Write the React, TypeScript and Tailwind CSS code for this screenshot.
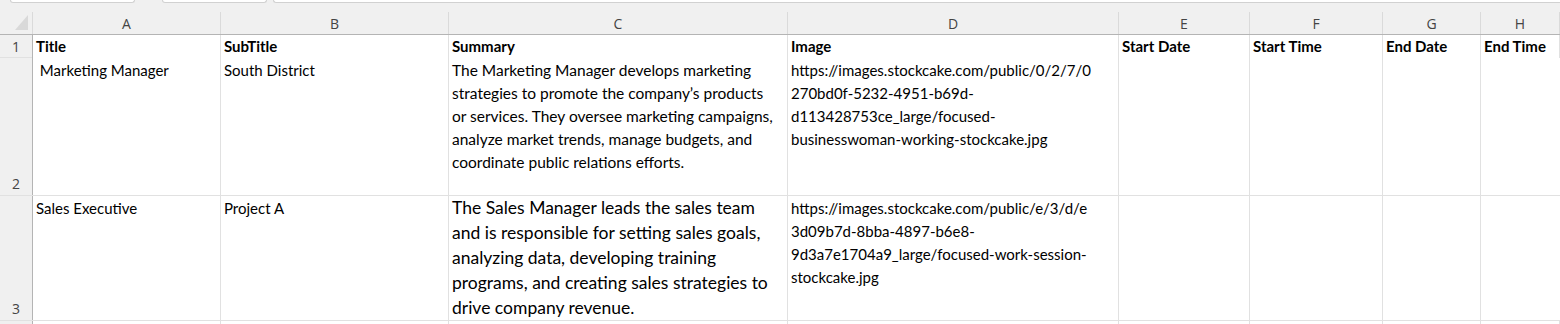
import React from "react";

const cols = ["A", "B", "C", "D", "E", "F", "G", "H"];
const grid = "grid grid-cols-[33px_188px_228px_339px_331px_131px_133px_98px_1fr]";

const rows = [
  {
    n: "2",
    h: "h-[138px]",
    big: false,
    title: " Marketing Manager",
    sub: "South District",
    summary: [
      "The Marketing Manager develops marketing",
      "strategies to promote the company\u2019s products",
      "or services. They oversee marketing campaigns,",
      "analyze market trends, manage budgets, and",
      "coordinate public relations efforts.",
    ],
    image: [
      "https://images.stockcake.com/public/0/2/7/0",
      "270bd0f-5232-4951-b69d-",
      "d113428753ce_large/focused-",
      "businesswoman-working-stockcake.jpg",
    ],
  },
  {
    n: "3",
    h: "h-[125px]",
    big: true,
    title: "Sales Executive",
    sub: "Project A",
    summary: [
      "The Sales Manager leads the sales team",
      "and is responsible for setting sales goals,",
      "analyzing data, developing training",
      "programs, and creating sales strategies to",
      "drive company revenue.",
    ],
    image: [
      "https://images.stockcake.com/public/e/3/d/e",
      "3d09b7d-8bba-4897-b6e8-",
      "9d3a7e1704a9_large/focused-work-session-",
      "stockcake.jpg",
    ],
  },
];

const headers = ["Title", "SubTitle", "Summary", "Image", "Start Date", "Start Time", "End Date", "End Time"];

function Lines({ lines, className }: { lines: string[]; className: string }) {
  return (
    <div className={className}>
      {lines.map((l, i) => (
        <div key={i} className="whitespace-pre">
          {l}
        </div>
      ))}
    </div>
  );
}

export default function App() {
  return (
    <div className="w-[1560px] h-[324px] overflow-hidden bg-[#f0f0f0] font-['Lato','Liberation_Sans',sans-serif] text-black">
      {/* top tab strip */}
      <div className="flex h-[12px] items-start">
        <div className="ml-[10px] h-[3px] w-[125px] rounded-b-[4px] border border-t-0 border-[#d1d1d1] bg-white" />
        <div className="ml-[27px] h-[3px] w-[105px] rounded-b-[4px] border border-t-0 border-[#d1d1d1] bg-white" />
        <div className="ml-[6px] h-[3px] flex-1 rounded-bl-[4px] border border-t-0 border-r-0 border-[#d1d1d1] bg-white" />
      </div>

      {/* column letters */}
      <div className={`${grid} h-[23px] border-b border-[#b4b4b4] font-['Open_Sans','Liberation_Sans',sans-serif] text-[14px] text-[#444]`}>
        <div className="relative border-r border-[#dadada]">
          <div className="absolute left-[15px] top-[3px] h-0 w-0 border-b-[15px] border-l-[13px] border-b-[#d9d9d9] border-l-transparent" />
        </div>
        {cols.map((c) => (
          <div key={c} className="flex items-center justify-center border-r border-[#dadada]">
            {c}
          </div>
        ))}
      </div>

      {/* row 1 headers */}
      <div className={`${grid} h-[23px] border-b border-[#e1e1e1]`}>
        <div className="flex items-end justify-center border-r border-[#b4b4b4] pb-[1px] font-['Open_Sans','Liberation_Sans',sans-serif] text-[14px] text-[#444]">
          1
        </div>
        {headers.map((h) => (
          <div key={h} className="flex items-center border-r border-[#e1e1e1] bg-white px-[3px] text-[15px] font-bold">
            {h}
          </div>
        ))}
      </div>

      {rows.map((r) => (
        <div key={r.n} className={`${grid} ${r.h} border-b border-[#e1e1e1]`}>
          <div className="flex items-end justify-center border-r border-[#b4b4b4] pb-[1px] font-['Open_Sans','Liberation_Sans',sans-serif] text-[14px] text-[#444]">
            {r.n}
          </div>
          <div className="whitespace-pre border-r border-[#e1e1e1] bg-white px-[3px] pt-[1px] text-[15px] leading-[23px]">
            {r.title}
          </div>
          <div className="border-r border-[#e1e1e1] bg-white px-[3px] pt-[1px] text-[15px] leading-[23px]">{r.sub}</div>
          <div className="border-r border-[#e1e1e1] bg-white px-[3px] pt-[1px]">
            <Lines
              lines={r.summary}
              className={r.big ? "-mt-[2px] text-[17.5px] leading-[25px]" : "text-[15.5px] leading-[23px]"}
            />
          </div>
          <div className="border-r border-[#e1e1e1] bg-white px-[3px] pt-[1px]">
            <Lines lines={r.image} className="text-[15px] leading-[23px]" />
          </div>
          <div className="border-r border-[#e1e1e1] bg-white" />
          <div className="border-r border-[#e1e1e1] bg-white" />
          <div className="border-r border-[#e1e1e1] bg-white" />
          <div className="bg-white" />
        </div>
      ))}

      <div className={`${grid} h-[10px]`}>
        <div className="border-r border-[#b4b4b4]" />
        {cols.map((c) => (
          <div key={c} className="border-r border-[#e1e1e1] bg-white" />
        ))}
      </div>
    </div>
  );
}
